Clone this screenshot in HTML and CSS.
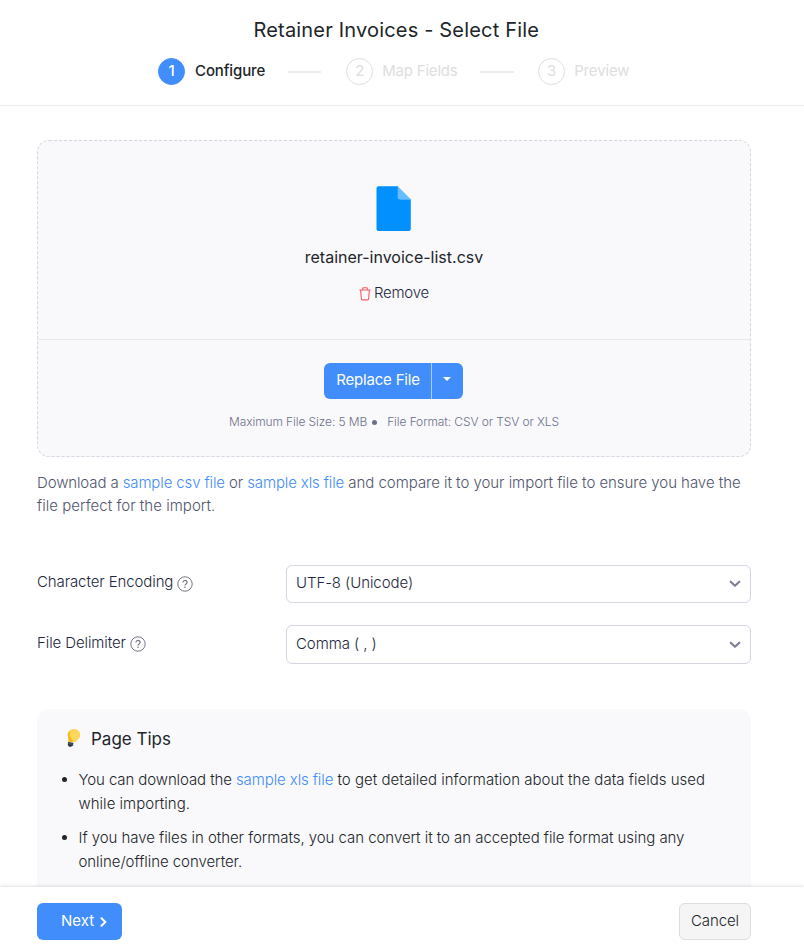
FILE: index.html
```html
<!DOCTYPE html>
<html lang="en">
<head>
<meta charset="utf-8">
<title>Retainer Invoices - Select File</title>
<link rel="stylesheet" href="styles.css">
</head>
<body>
<div class="page">
  <header class="header">
    <h1 class="title">Retainer Invoices - Select File</h1>
    <ol class="steps">
      <li class="step step-active"><span class="step-num">1</span><span class="step-name">Configure</span></li>
      <li class="step-line"></li>
      <li class="step step-map"><span class="step-num">2</span><span class="step-name">Map Fields</span></li>
      <li class="step-line step-line-last"></li>
      <li class="step step-preview"><span class="step-num">3</span><span class="step-name">Preview</span></li>
    </ol>
  </header>

  <main class="content">
    <section class="upload">
      <div class="upload-file">
        <svg class="file-icon" width="35" height="46" viewBox="0 0 35 46">
          <path fill="#0091ff" d="M2.500.3H22V11.500a1.800 1.800 0 0 0 1.800 1.800H34.800V43a2 2 0 0 1-2 2H2.500a2 2 0 0 1-2-2V2.300a2 2 0 0 1 2-2z"/>
          <path fill="#66bdff" d="M21.700.3L34.800 13.300H23.700a2 2 0 0 1-2-2z"/>
        </svg>
        <div class="file-name">retainer-invoice-list.csv</div>
        <button class="remove">
          <svg width="12" height="14" viewBox="0 0 12 14" fill="none" stroke="#ef5b67" stroke-width="1.100">
            <path d="M.3 3H11.700M3.700 3V1.500a.8.8 0 0 1 .8-.8h3a.8.8 0 0 1 .8.8V3M1.600 3l.8 9a1 1 0 0 0 1 .9h5.200a1 1 0 0 0 1-.9l.8-9"/>
          </svg>
          <span>Remove</span>
        </button>
      </div>
      <div class="upload-actions">
        <div class="split">
          <button class="split-main">Replace File</button>
          <button class="split-toggle" aria-label="More options"><svg width="8" height="4" viewBox="0 0 8 4"><path fill="#fff" d="M0 0h8L4 4z"/></svg></button>
        </div>
        <div class="limits"><span>Maximum File Size: 5 MB</span><i class="dot"></i><span>File Format: CSV or TSV or XLS</span></div>
      </div>
    </section>

    <p class="sample"><span class="sample-lead">Download a <a>sample csv file</a> or <a>sample xls file</a></span> and compare it to your import file to ensure you have the<br><span class="sample-end">file perfect for the import.</span></p>

    <div class="field">
      <label class="label">Character Encoding
        <svg class="help" width="16" height="16" viewBox="0 0 16 16" fill="none" stroke="#77758a"><circle cx="8" cy="8" r="7.200" stroke-width="1"/><path stroke-width="1.200" d="M5.900 6.400a2.100 2 0 1 1 3.200 1.700c-.8.500-1.100.8-1.100 1.500M8 10.600v1.300"/></svg>
      </label>
      <div class="select"><span>UTF-8 (Unicode)</span><svg class="chevron" width="12" height="8" viewBox="0 0 12 8"><path d="M1.700 1.700L6 5.800l4.300-4.100"/></svg></div>
    </div>
    <div class="field field-second">
      <label class="label">File Delimiter
        <svg class="help" width="16" height="16" viewBox="0 0 16 16" fill="none" stroke="#77758a"><circle cx="8" cy="8" r="7.200" stroke-width="1"/><path stroke-width="1.200" d="M5.900 6.400a2.100 2 0 1 1 3.200 1.700c-.8.500-1.100.8-1.100 1.500M8 10.600v1.300"/></svg>
      </label>
      <div class="select"><span>Comma ( , )</span><svg class="chevron" width="12" height="8" viewBox="0 0 12 8"><path d="M1.700 1.700L6 5.800l4.300-4.100"/></svg></div>
    </div>

    <section class="tips">
      <h2 class="tips-title">
        <svg width="14" height="18" viewBox="0 0 14 18">
          <path fill="#fbd75b" d="M7.500 0a5.600 5.600 0 0 1 5.700 5.700c0 4-3.400 4.700-4.600 7.300H1.500C1.500 9.500.8 8 .8 5.800A6 6 0 0 1 7.500 0z"/>
          <path fill="#f3b71c" d="M4 1C1 2.500.4 5 1 7.500c.5 2 .5 3.500.5 5.300h3.200l1.500-1C3 9 1.500 4.500 4 1z"/>
          <path fill="#263241" d="M1 12.900l5.400.8-.3 2.600c-.8 1.400-3 1.900-4.500.9L.8 15.800z"/>
          <path stroke="#77808a" stroke-width=".6" d="M1.200 14.600l4.800.6"/>
        </svg>
        <span>Page Tips</span>
      </h2>
      <ul class="tips-list">
        <li class="tip-download"><span class="lead">You can download the <a>sample xls file</a></span> to get detailed information about the data fields used<br>while importing.</li>
        <li>If you have files in other formats, you can convert it to an accepted file format using any<br>online/offline converter.</li>
      </ul>
    </section>
  </main>

  <footer class="footer">
    <button class="next"><span>Next</span><svg width="7" height="10" viewBox="0 0 7 10"><path d="M1.500 1.200L5.300 5 1.500 8.800"/></svg></button>
    <button class="cancel">Cancel</button>
  </footer>
</div>
</body>
</html>
```

FILE: styles.css
```css
* { box-sizing: border-box; }

body {
  margin: 0;
  background: #fff;
  color: #21263c;
  font: 300 15px/24px Inter, sans-serif;
}

h1, h2, p, ol, ul { margin: 0; padding: 0; }
a { color: #408dfb; }
svg { display: block; flex: none; }

button {
  border: 0;
  padding: 0;
  background: none;
  color: inherit;
  font: inherit;
  letter-spacing: inherit;
}

.page {
  display: flex;
  flex-direction: column;
  width: 804px;
  height: 949px;
  overflow: hidden;
}

.header {
  flex: none;
  height: 106px;
  padding-top: 15px;
  border-bottom: 1px solid #ececee;
}

.title {
  padding-left: 253.5px;
  color: #212529;
  font-size: 20px;
  font-weight: 400;
  line-height: 30px;
  letter-spacing: 0.18px;
  white-space: nowrap;
}

.steps {
  display: flex;
  align-items: center;
  height: 27px;
  margin-top: 13px;
  padding-left: 158px;
  list-style: none;
}

.step {
  display: flex;
  align-items: center;
  gap: 10px;
  color: #dedede;
  font-weight: 400;
  letter-spacing: -0.12px;
}

.step-map { gap: 9px; letter-spacing: -0.2px; }
.step-preview { gap: 9px; }
.step-name { padding-bottom: 2px; }

.step-num {
  display: flex;
  align-items: center;
  justify-content: center;
  width: 27px;
  height: 27px;
  padding-bottom: 1px;
  border: 1px solid #dedede;
  border-radius: 50%;
}

.step-active { color: #212529; font-weight: 500; }
.step-active .step-num { background: #408dfb; border-color: #408dfb; color: #fff; }

.step-line {
  width: 33px;
  height: 2px;
  margin: 1px 25px 0 23px;
  background: #ececec;
}

.step-line-last { width: 34px; margin-right: 24px; margin-left: 22.6px; }

.content {
  flex: 1;
  min-height: 0;
  padding: 34px 53px 0 37px;
  overflow: hidden;
}

.upload {
  height: 317px;
  border: 1px dashed #d7d5e2;
  border-radius: 12px;
  background: #f9f9fb;
}

.upload-file {
  display: flex;
  flex-direction: column;
  align-items: center;
  height: 199px;
  padding-top: 45px;
  border-bottom: 1px solid #e8e7f0;
}

.file-icon { margin-right: 1px; }

.file-name {
  margin-top: 13px;
  color: #212529;
  font-size: 16px;
  font-weight: 400;
}

.remove {
  display: flex;
  align-items: center;
  gap: 3px;
  margin-top: 12px;
  letter-spacing: -0.2px;
}

.remove svg { margin-top: 1px; }

.upload-actions {
  display: flex;
  flex-direction: column;
  align-items: center;
  padding-top: 23px;
}

.split {
  display: flex;
  height: 36px;
  margin-right: 1px;
  overflow: hidden;
  border-radius: 6px;
  background: #408dfb;
  color: #fff;
  font-weight: 400;
  letter-spacing: -0.2px;
}

.split-main { width: 107px; padding: 0 0 2px 1px; }

.split-toggle {
  display: flex;
  align-items: center;
  justify-content: center;
  width: 32px;
  padding: 0 1px 4px 0;
  border-left: 1px solid #a9ccfd;
}

.limits {
  display: flex;
  align-items: center;
  margin-top: 13px;
  color: #6c718a;
  font-size: 12px;
  line-height: 20px;
  letter-spacing: -0.1px;
}

.dot {
  width: 5px;
  height: 5px;
  margin: 0 10px 0 5px;
  border-radius: 50%;
  background: #6c718a;
}

.sample {
  margin-top: 14px;
  color: #50566b;
  line-height: 23px;
  letter-spacing: -0.04px;
  white-space: nowrap;
}

.sample-lead { letter-spacing: -0.12px; }
.sample-end { letter-spacing: 0.03px; }

.field {
  display: flex;
  height: 38px;
  margin-top: 48px;
}

.field-second { height: 39px; margin-top: 22px; }

.label {
  display: flex;
  gap: 4px;
  width: 249px;
  padding-top: 5px;
  letter-spacing: -0.1px;
}

.help { margin-top: 5.500px; }
.field-second .label { padding-top: 6px; }
.field-second .help { margin-top: 5px; }

.select {
  display: flex;
  flex: 1;
  align-items: center;
  justify-content: space-between;
  padding: 0 9px 2px;
  border: 1px solid #d7d5e2;
  border-radius: 6px;
  letter-spacing: -0.08px;
}

.chevron {
  margin-top: 2px;
  fill: none;
  stroke: #817f94;
  stroke-width: 2.2;
  stroke-linecap: round;
  stroke-linejoin: round;
}

.tips {
  height: 240px;
  margin-top: 45px;
  padding: 18px 28px;
  border-radius: 12px;
  background: #f9f9fb;
  color: #212529;
}

.tips-title {
  display: flex;
  align-items: center;
  gap: 10px;
  padding-left: 2px;
  font-size: 17px;
  font-weight: 400;
  line-height: 24px;
}

.tips-title svg { margin-bottom: 2px; }

.tips-list {
  margin-top: 17px;
  padding-left: 13.5px;
  letter-spacing: -0.05px;
  white-space: nowrap;
}

.tips-list li { margin-bottom: 10px; }
.tips-list .tip-download { letter-spacing: 0.02px; }
.lead { letter-spacing: -0.1px; }

.footer {
  z-index: 1;
  display: flex;
  flex: none;
  align-items: flex-start;
  justify-content: space-between;
  height: 62px;
  padding: 16px 53px 0 37px;
  background: #fff;
  box-shadow: 0 -1px 3px rgba(0, 0, 0, 0.13);
}

.next {
  display: flex;
  align-items: center;
  justify-content: center;
  gap: 6px;
  width: 85px;
  height: 37px;
  padding: 0 0 2px 9px;
  border-radius: 6px;
  background: #408dfb;
  color: #fff;
  font-weight: 400;
}

.next svg {
  margin-top: 3px;
  fill: none;
  stroke: #fff;
  stroke-width: 2;
  stroke-linecap: round;
  stroke-linejoin: round;
}

.cancel {
  width: 72px;
  height: 37px;
  padding-bottom: 2px;
  border: 1px solid #ddd;
  border-radius: 6px;
  background: #f5f5f5;
  color: #212529;
  letter-spacing: -0.1px;
}
```
